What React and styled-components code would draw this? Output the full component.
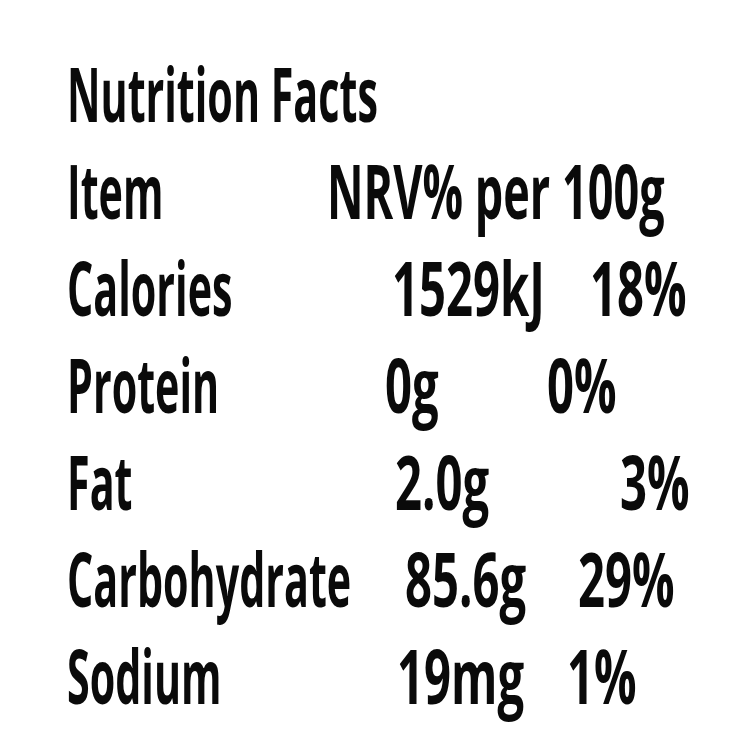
import React from 'react'
import styled, { createGlobalStyle } from 'styled-components'

const GlobalStyle = createGlobalStyle`
  html, body {
    margin: 0;
    padding: 0;
    background: #ffffff;
  }
  body {
    font-family: "Open Sans", "Noto Sans", sans-serif;
    color: #0a0a0a;
  }
`

const Sheet = styled.div`
  width: 756px;
  height: 756px;
  box-sizing: border-box;
  padding: 45px 0 0 67px;
  background: #ffffff;
  overflow: hidden;
`

const Row = styled.div`
  display: grid;
  grid-template-columns: 260px 220px 1fr;
  height: 97px;
  line-height: 97px;
  font-size: 75px;
  font-weight: 700;
`

const Cell = styled.div`
  padding-left: ${(p) => p.$indent || 0}px;
  grid-column: ${(p) => p.$span || 'auto'};
  white-space: nowrap;
`

// the label uses a very narrow face, so squeeze the glyphs sideways
const Squeeze = styled.span`
  display: inline-block;
  transform: scaleX(${(p) => p.$scale || 0.55});
  transform-origin: left center;
`

const rows = [
  { name: 'Calories', amount: '1529kJ', nrv: '18%', a: 65, b: 43 },
  { name: 'Protein', amount: '0g', nrv: '0%', a: 58, b: 0 },
  { name: 'Fat', amount: '2.0g', nrv: '3%', a: 68, b: 73 },
  { name: 'Carbohydrate', amount: '85.6g', nrv: '29%', a: 78, b: 31 },
  { name: 'Sodium', amount: '19mg', nrv: '1%', a: 70, b: 20 },
]

function App() {
  return (
    <>
      <GlobalStyle />
      <Sheet>
        <Row>
          <Cell $span="1 / 4">
            <Squeeze>Nutrition Facts</Squeeze>
          </Cell>
        </Row>
        <Row>
          <Cell>
            <Squeeze>Item</Squeeze>
          </Cell>
          <Cell $span="2 / 4">
            <Squeeze $scale={0.6}>NRV% per 100g</Squeeze>
          </Cell>
        </Row>
        {rows.map((r) => (
          <Row key={r.name}>
            <Cell>
              <Squeeze>{r.name}</Squeeze>
            </Cell>
            <Cell $indent={r.a}>
              <Squeeze $scale={0.63}>{r.amount}</Squeeze>
            </Cell>
            <Cell $indent={r.b}>
              <Squeeze $scale={0.63}>{r.nrv}</Squeeze>
            </Cell>
          </Row>
        ))}
      </Sheet>
    </>
  )
}

export default App
